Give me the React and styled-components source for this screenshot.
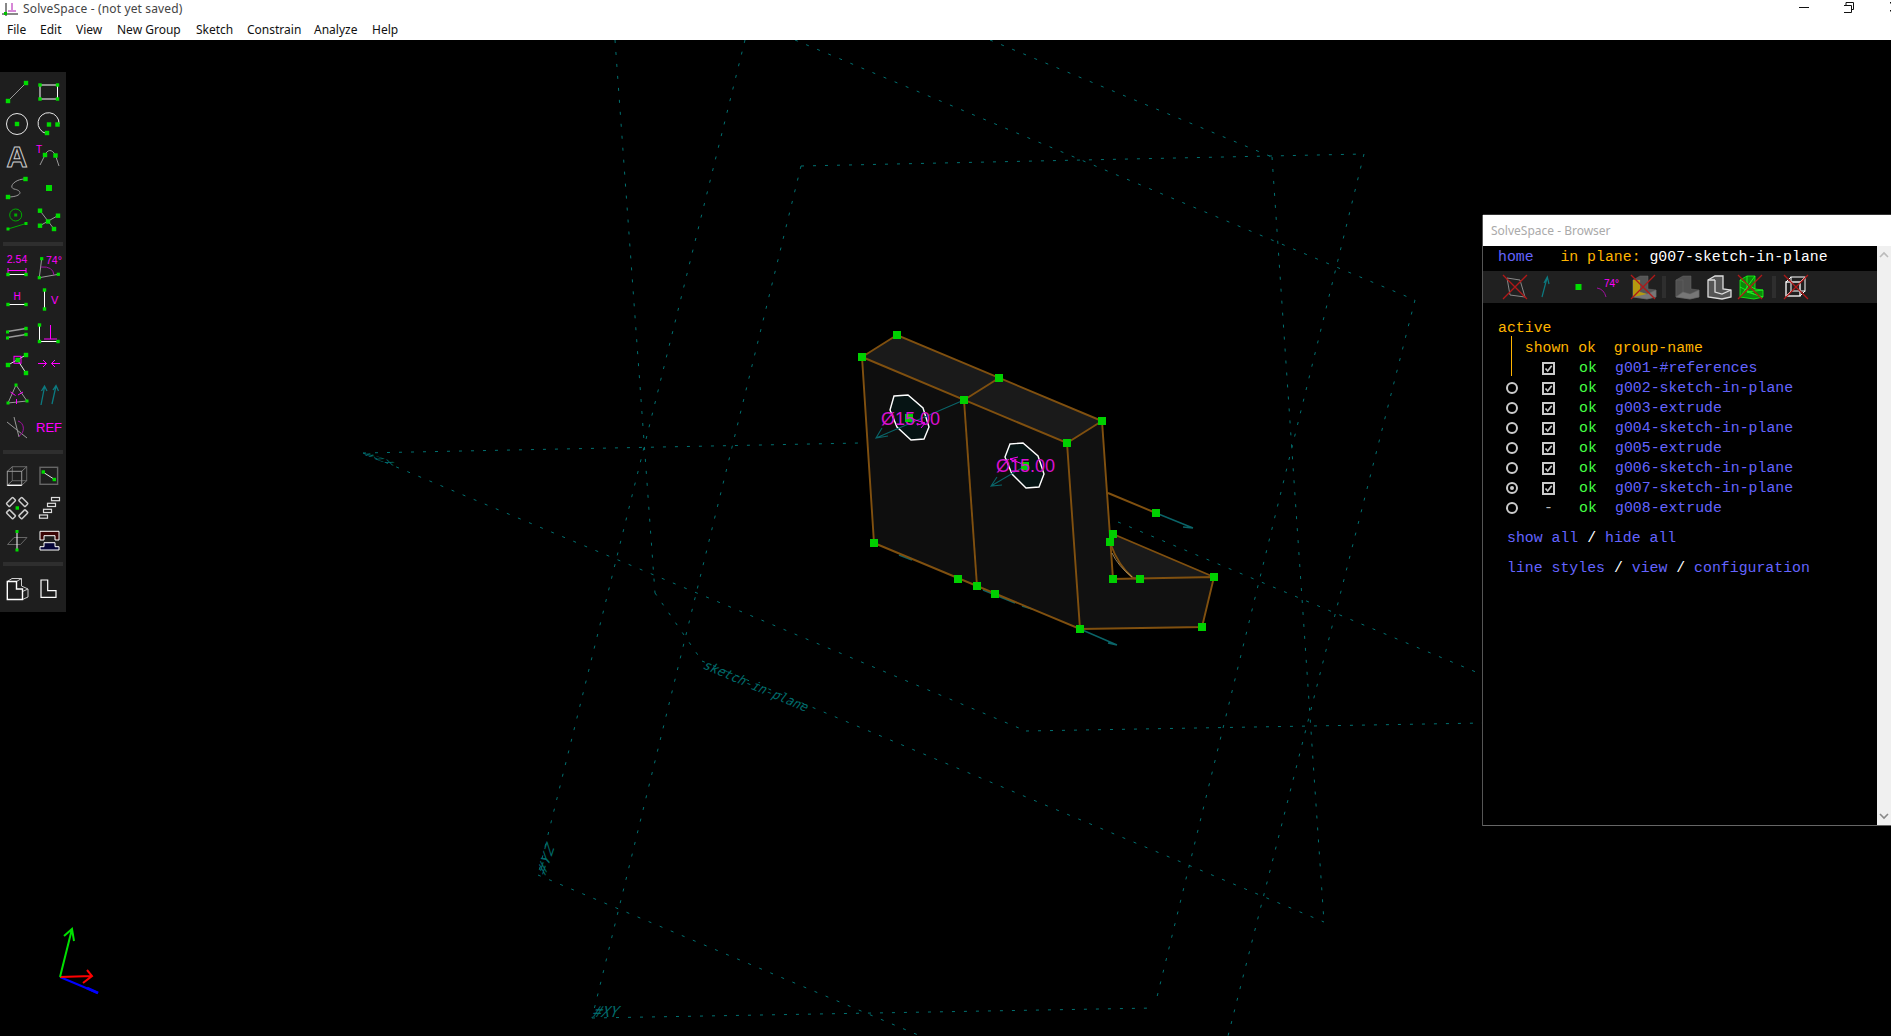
import React from "react";
import styled, { createGlobalStyle } from "styled-components";

const Global = createGlobalStyle`
  html, body { margin: 0; padding: 0; background: #000; overflow: hidden; }
  #root { width: 1891px; height: 1036px; }
`;

const Page = styled.div`
  width: 1891px; height: 1036px; display: flex; flex-direction: column;
  background: #000; font-family: "Noto Sans", "Liberation Sans", sans-serif;
`;
const TitleBar = styled.header`
  height: 20px; background: #fff; display: flex; align-items: center; color: #444; font-size: 12px;
`;
const AppIcon = styled.svg`width: 20px; height: 18px; margin: 0 3px 0 0; flex: none;`;
const TitleText = styled.span`flex: 1; white-space: nowrap; line-height: 16px; position: relative; top: -1px; letter-spacing: 0.14px;`;
const WinButtons = styled.div`display: flex; align-items: center; height: 20px;`;
const WinButton = styled.svg`width: ${p => p.$w}px; height: 20px; display: block;`;
const MenuBar = styled.nav`
  height: 20px; background: #fff; display: flex; align-items: center; font-size: 12px; color: #111; padding-left: 7px; gap: 15px;
`;
const MenuItem = styled.span`display: block; width: ${p => p.$w}px; white-space: nowrap; line-height: 20px;`;
const Canvas = styled.main`flex: 1; position: relative; overflow: hidden; background: #000;`;
const Scene = styled.svg`display: block; width: 1891px; height: 996px;`;

const Toolbar = styled.aside`
  position: absolute; left: 0; top: 32px; width: 66px; height: 540px; background: #1e1e1e;
  padding-top: 4px; box-sizing: border-box; display: flex; flex-direction: column; align-items: center;
`;
const ToolGroup = styled.div`display: grid; grid-template-columns: 32px 32px; grid-auto-rows: 32px; width: 64px;`;
const ToolSep = styled.div`width: 60px; height: 4px; background: #2e2e2e; margin: ${p => p.$m};`;
const Ico = styled.svg`width: 32px; height: 32px; display: block; overflow: visible;`;

const Browser = styled.section`
  position: absolute; left: 1483px; top: 175px; width: 408px; height: 611px; background: #000;
  display: flex; flex-direction: column; box-sizing: border-box; border-bottom: 1px solid #666; box-shadow: -1px 0 0 #555, 0 -1px 0 #333;
`;
const BrowserTitle = styled.div`
  height: 31px; flex: none; background: #fff; color: #aaa; font-size: 12px; padding-left: 8px; display: flex; align-items: center;
`;
const BrowserBody = styled.div`flex: 1; display: flex; min-height: 0;`;
const BrowserMain = styled.div`
  flex: 1; font-family: "Liberation Mono", "DejaVu Sans Mono", monospace; font-size: 14.85px; color: #fff; white-space: pre;
`;
const Line = styled.div`
  height: 20px; line-height: 20px; padding-left: ${p => p.$pad || 15}px; margin-top: ${p => p.$mt || 0}px; color: ${p => p.$c || "#fff"};
`;
const Link = styled.span`color: #6464ff;`;
const Amber = styled.span`color: #ffb400;`;
const IconBar = styled.div`
  height: 32px; margin-top: 4px; background: #202020; display: flex; align-items: center; padding-left: 16px;
`;
const BarSep = styled.div`width: 4px; height: 22px; background: #2e2e2e; margin: 0 4px 0 ${p => p.$l || 4}px;`;
const List = styled.div`position: relative; margin-top: 15px;`;
const ActiveLine = styled.div`
  position: absolute; left: 28px; top: 18px; width: 1px; height: 40px; background: #ffb400;
`;
const Row = styled.div`
  display: grid; grid-template-columns: 36px 13px 24px 36px 1fr; height: 20px; align-items: center; line-height: 20px;
  padding-left: 23px;
`;
const Radio = styled.span`
  width: 12px; height: 12px; box-sizing: border-box; border: 2px solid #ccc; border-radius: 50%; display: flex; align-items: center; justify-content: center;
  &::after { content: ""; display: ${p => p.$on ? "block" : "none"}; width: 4px; height: 4px; border-radius: 50%; background: #ccc; }
`;
const Check = styled.svg`width: 13px; height: 13px; display: block;`;
const Dash = styled.span`color: #bbb; text-align: center;`;
const Ok = styled.span`color: #44ff44;`;
const Name = styled.span`color: #6464ff;`;
const Scrollbar = styled.div`
  width: 14px; flex: none; background: #f0f0f0; display: flex; flex-direction: column; justify-content: space-between; align-items: center; padding: 5px 0; box-sizing: border-box;
`;
const Arrow = styled.svg`width: 10px; height: 7px; display: block;`;

const GREEN = "#00dc00";
const MAG = "#ff00ff";
const WH = "#e8e8e8";
const GR = "#999";
const S = ({ x, y, s = 4.4, c = GREEN }) => <rect x={x - s / 2} y={y - s / 2} width={s} height={s} fill={c} />;
const T = ({ x, y, size = 10, c = MAG, children, anchor = "start" }) => (
  <text x={x} y={y} fontSize={size} fill={c} textAnchor={anchor} fontFamily="'Liberation Sans', sans-serif">{children}</text>
);
const LN = ({ d, c = WH, w = 1 }) => <path d={d} fill="none" stroke={c} strokeWidth={w} />;

const Pill = ({ x, y, a }) => (
  <rect x="-4.5" y="-2.2" width="9" height="4.4" rx="0.8" fill="none" stroke="#ccc" strokeWidth="1.5" transform={`translate(${x},${y}) rotate(${a})`} />
);

const tools = [
  [
    <><LN d="M7 25L25 7" c={GR} /><S x={7} y={25} /><S x={25} y={7} /></>,
    <><rect x="7" y="9" width="17.5" height="14" fill="none" stroke="#fff" /><S x={7} y={9} s={3.4} /><S x={24.5} y={9} s={3.4} /><S x={7} y={23} s={3.4} /><S x={24.5} y={23} s={3.4} /></>,
    <><circle cx="16" cy="16" r="10.5" fill="none" stroke={WH} /><S x={16} y={16} /></>,
    <><LN d="M13.5 25.5A10.5 10.5 0 1 1 26 16" /><S x={16} y={16.5} /><S x={24.5} y={16.5} /><S x={14} y={25} /></>,
    <text x="16" y="27" fontSize="29" fontWeight="bold" fill="#1e1e1e" stroke="#ccc" strokeWidth="1" textAnchor="middle" fontFamily="'Liberation Sans', sans-serif">A</text>,
    <><T x={3} y={13} size={10}>T</T><LN d="M7 25L12 15C14 10 19 8 22.5 15.5L26 26" c={GR} /><S x={12} y={15} /><S x={22.5} y={15.5} /></>,
    <><LN d="M7 25C20 25 23 19 13 17C7 15 14 7 24 7" c={GR} /><S x={7} y={25} /><S x={24.5} y={7} /></>,
    <S x={16} y={16} s={6} />,
    <><circle cx="14.7" cy="11" r="6" fill="none" stroke="#0a0" /><S x={14.7} y={11} s={3} c="#0a0" /><LN d="M7 25L25 19.5" c="#0a0" /><S x={7} y={25} s={3} /><S x={25} y={19.5} s={3} /></>,
    <><LN d="M7 6.7L21 25M7 21.7L24.7 11.7" c={GR} /><S x={7} y={6.7} /><S x={21} y={25} /><S x={7} y={21.7} /><S x={25} y={11.7} /><S x={15} y={17.5} /></>,
  ],
  [
    <><T x={16} y={12} size={10.5} anchor="middle">2.54</T><LN d="M7 17v5M7 19.5H25M25 17v5" c={MAG} /><LN d="M7 23.5H25" c="#fff" /><S x={7} y={23.5} s={3.4} /><S x={25} y={23.5} s={3.4} /></>,
    <><T x={13} y={13} size={10.5}>74°</T><LN d="M8.7 7.7L6.3 26.7L25.3 23.3" c={GR} /><LN d="M8 16Q20 15 21 24" c="#a010a0" /><S x={8.7} y={7.7} s={3.2} /><S x={6.3} y={26.7} s={3.2} /><S x={25.3} y={23.3} s={3.2} /></>,
    <><T x={16} y={17} size={10} anchor="middle">H</T><LN d="M7 21.5H25" c="#fff" /><S x={7} y={21.5} s={3.4} /><S x={25} y={21.5} s={3.4} /></>,
    <><T x={18} y={21} size={11}>V</T><LN d="M11.5 7V26" c="#fff" /><S x={11.5} y={7} s={3.4} /><S x={11.5} y={26} s={3.4} /></>,
    <><LN d="M6.5 16.5L25 13.5M6.5 22.5L25 19.5" c={GR} w={1.3} /><S x={25} y={13.5} s={3.4} /><S x={25} y={19.5} s={3.4} /><S x={6.5} y={17} s={3} /><S x={6.5} y={23} s={3} /></>,
    <><LN d="M6.5 10V27M6.5 26.5H25" c="#fff" /><LN d="M17.5 10V24M11 24H24" c={MAG} /><S x={6.5} y={10} s={3.4} /><S x={6.5} y={26.5} s={3.4} /><S x={25} y={26.5} s={3.4} /></>,
    <><LN d="M7 18L25 8M16.5 13L25 26" c={WH} /><S x={7} y={18} /><S x={25} y={8} /><S x={25} y={26} /><S x={16.7} y={13} /><rect x="13" y="9.3" width="7" height="7" fill="none" stroke={MAG} /></>,
    <><LN d="M5 16.5H13.5M10 13l3.5 3.5L10 20M27 16.5H18.5M22 13l-3.5 3.5L22 20" c={MAG} /></>,
    <><LN d="M15 6L7 24L26 22Z" c={GR} /><LN d="M9.5 13l5 3.5M22 13l-5 3M15.5 20v5" c={MAG} /><S x={15} y={6} s={3} /><S x={7} y={24} s={3} /><S x={26} y={22} s={3} /></>,
    <><LN d="M8 26L11.5 8M8.5 12L11.5 7L14 12M19 25L23 7M20 11L23 6.5L25.5 12" c="#0c7a80" w={1.3} /></>,
    <><LN d="M6 11L26 27M13 6L18 26" c={GR} /><LN d="M17 10C24 12 24 22 18 25" c="#a010a0" /></>,
    <T x={16} y={21} size={13} anchor="middle">REF</T>,
  ],
  [
    <><rect x="11.3" y="6.7" width="14.4" height="14" fill="none" stroke="#666" /><LN d="M6.3 11.3L11.3 6.7M20.7 11.3L25.7 6.7M20.7 25.3L25.7 20.7M6.3 25.3L11.3 20.7" c="#777" /><rect x="6.3" y="11.3" width="14.4" height="14" fill="none" stroke="#999" /><LN d="M6.3 25.3H20.7" c="#fff" w={1.3} /></>,
    <><rect x="7" y="7.3" width="17.6" height="17" fill="none" stroke="#666" strokeWidth="1.4" /><LN d="M10.3 12.3L21.3 19.3" c={WH} /><S x={10.3} y={12} s={3.4} /><S x={21.3} y={19.5} s={3.4} /></>,
    <><Pill x={10} y={10} a={-45} /><Pill x={22.3} y={10} a={45} /><Pill x={10} y={22.3} a={45} /><Pill x={22.3} y={22.3} a={-45} /><S x={16.3} y={16} s={3.4} /></>,
    <g fill="none" stroke="#ddd" strokeWidth="1.2"><rect x="6.5" y="23" width="8" height="3.2" /><rect x="10.5" y="17.3" width="8" height="3.2" /><rect x="14.5" y="11.3" width="8" height="3.2" /><rect x="18.5" y="5.5" width="8" height="3.2" /></g>,
    <><path d="M6.5 20.5L13 13.5H26L19.5 20.5Z" fill="none" stroke="#666" /><LN d="M16 7V26" c="#fff" /><S x={16} y={7.5} s={3} /><S x={16} y={26} s={3} /></>,
    <><path d="M7 7.3H26V16H22V11.7H11V16H7Z" fill="#3a0505" stroke="#fff" strokeWidth="1" /><path d="M7 26V22.7H11V18.7H22V22.7H26V26Z" fill="#050538" stroke="#fff" strokeWidth="1" /></>,
  ],
  [
    <><LN d="M11 6.5H20.5V14M20.5 14L27 17V25L21.5 27.5M6.3 9.5L11 6.5M15.5 9.5L20.5 6.5M21.5 27.5V19.5L27 17" c="#ccc" /><path d="M6.3 9.5H15.5V17H21.5V27.5H6.3Z" fill="none" stroke="#fff" strokeWidth="1.4" /></>,
    <path d="M8 8H14.7V18.7H23V25.3H8Z" fill="none" stroke="#fff" strokeWidth="1.2" />,
  ],
];

const Xx = () => <LN d="M4 4L28 28M28 4L4 28" c="#b01818" w={1.3} />;
const LSolid = ({ f = "#555", s = "#666", sw = 0.5 }) => (
  <g stroke={s} strokeWidth={sw}>
    <path d="M6 9L13 5H21V18L29 19V26L20 28L6 26Z" fill={f} />
    <path d="M6 9H13V21L6 26Z" fill={f} />
    <path d="M13 21L20 23L29 19V26L20 28L6 26Z" fill="#777" />
  </g>
);
const barIcons = [
  { k: 1, el: <><path d="M8 7L21 9L26 26L11 24Z" fill="none" stroke="#888" strokeWidth="1" /><Xx /></> },
  { k: 2, el: <LN d="M11 26L16 7M13 12L16.3 6L18 13" c="#0c7a80" w={1.2} /> },
  { k: 3, el: <S x={15.5} y={16} s={6} /> },
  { k: 4, el: <><T x={9} y={16} size={10}>74°</T><LN d="M2 17Q9 18 11 26" c="#a010a0" /></> },
  { k: 5, el: <><LSolid f="#555" /><path d="M6 9H13V21L20 23L6 26Z" fill="#b59a10" /><Xx /></> },
  { sep: true, k: 6, l: 3 },
  { k: 7, el: <LSolid f="#505050" /> },
  { k: 8, el: <><path d="M6 9L13 5H21V18L29 19V26L20 28L6 26Z" fill="#555" stroke="#ddd" strokeWidth="1.3" /><path d="M13 9V21L20 23L29 19M6 9H13" fill="none" stroke="#ddd" strokeWidth="1.3" /></> },
  { k: 9, el: <><path d="M6 9L13 5H21V18L29 19V26L20 28L6 26Z" fill="#0a8a0a" stroke="#1f1" strokeWidth="0.8" /><path d="M6 9L21 18M13 5L13 21L29 26M6 26L21 5M13 21L29 19M20 23L6 16" fill="none" stroke="#2f2" strokeWidth="0.8" /><Xx /></> },
  { sep: true, k: 10, l: 6 },
  { k: 11, el: <><rect x="11" y="6" width="14" height="14" fill="none" stroke="#fff" strokeWidth="1" /><rect x="6" y="11" width="14" height="14" fill="none" stroke="#fff" strokeWidth="1.3" /><LN d="M6 11L11 6M20 11L25 6M20 25L25 20M6 25L11 20" c="#fff" /><Xx /></> },
];

const groups = [
  ["g001-#references", null, true],
  ["g002-sketch-in-plane", false, true],
  ["g003-extrude", false, true],
  ["g004-sketch-in-plane", false, true],
  ["g005-extrude", false, true],
  ["g006-sketch-in-plane", false, true],
  ["g007-sketch-in-plane", true, true],
  ["g008-extrude", false, false],
];

const dashed = [
  [363, 453, 1026, 731], [1026, 731, 1483, 723], [363, 453, 860, 443],
  [615, 40, 655, 593], [655, 593, 702, 661], [702, 661, 1324, 922],
  [745, 40, 538, 875], [801, 166, 592, 1018], [801, 166, 1364, 154],
  [990, 40, 1272, 157], [795, 40, 1415, 300], [1272, 157, 1324, 922],
  [1364, 154, 1157, 997], [1415, 300, 1228, 1036], [592, 1018, 1155, 1008],
  [538, 875, 930, 1040], [1118, 522, 1483, 675],
];

const pts = [[897,335],[862,357],[999,378],[964,400],[1102,421],[1067,443],[874,543],[958,579],[977,586],[995,594],[1080,629],[1202,627],[1214,577],[1140,579],[1113,579],[1110,542],[1113,534],[1156,513]];
const BR = "#80500f";

export default function App() {
  return (
    <Page>
      <Global />
      <TitleBar>
        <AppIcon viewBox="0 0 20 18">
          <path d="M6 2V15M2 13H18" stroke="#111" strokeWidth="1" fill="none" />
          <path d="M12 2V9M8 10H16" stroke="#b010b0" strokeWidth="1" fill="none" />
          <rect x="4" y="11" width="3" height="3" fill="#00c000" />
        </AppIcon>
        <TitleText>SolveSpace - (not yet saved)</TitleText>
        <WinButtons>
          <WinButton $w={45} viewBox="0 0 45 20"><path d="M0 7.5H10" stroke="#111" /></WinButton>
          <WinButton $w={46} viewBox="0 0 46 20"><path d="M-.5 5.5H7.5V12.5H-.5ZM2 5V2.5H9.5V9.5H8" fill="none" stroke="#111" /></WinButton>
          <WinButton $w={1} viewBox="0 0 1 20"><path d="M.5 2V3.5M.5 10V11.5" stroke="#111" /></WinButton>
        </WinButtons>
      </TitleBar>
      <MenuBar>
        {[["File",18],["Edit",21],["View",26],["New Group",64],["Sketch",36],["Constrain",52],["Analyze",43],["Help",26]].map(([m, w]) => (
          <MenuItem key={m} $w={w}>{m}</MenuItem>
        ))}
      </MenuBar>
      <Canvas>
        <Scene viewBox="0 40 1891 996">
          <g stroke="#007272" strokeWidth="1" strokeDasharray="3 9" fill="none">
            {dashed.map((l, i) => <line key={i} x1={l[0]} y1={l[1]} x2={l[2]} y2={l[3]} />)}
          </g>
          <g fill="#006a6a" fontFamily="'DejaVu Sans Mono', monospace">
            <text transform="translate(702,668) rotate(23) skewX(-15)" fontSize="13" textLength="112" lengthAdjust="spacingAndGlyphs">sketch-in-plane</text>
            <text transform="translate(592,1017) skewX(-22)" fontSize="15" textLength="25" lengthAdjust="spacingAndGlyphs">#XY</text>
            <text transform="translate(545,877) rotate(-72) skewX(-30)" fontSize="13" textLength="30" lengthAdjust="spacingAndGlyphs">#YZ</text>
            <text transform="translate(364,455) rotate(20) scale(1,.35)" fontSize="14" textLength="32" lengthAdjust="spacingAndGlyphs">#ZX</text>
          </g>

          <path d="M897 335L1102 421L1067 443L862 357Z" fill="#1a1a1a" />
          <path d="M862 357L1067 443L1080 629L874 543Z" fill="#0e0e0e" />
          <path d="M1067 443L1102 421L1113 579L1214 577L1202 627L1080 629Z" fill="#111" />
          <path d="M1113 534L1214 577L1140 579L1133 578Q1118 565 1111 545Z" fill="#191919" />

          <polygon points="894,396 908,395 923,408 929,427 924,439 911,440 897,427 890,410" fill="#061414" stroke="#fff" strokeWidth="1.4" />
          <polygon points="1010,444 1023,443 1038,456 1044,474 1039,487 1026,488 1012,474 1005,457" fill="#061414" stroke="#fff" strokeWidth="1.4" />

          <g stroke="#0a6468" strokeWidth="1.1" fill="none">
            <path d="M964 400L876 438M888 436L876 438L882 428" />
            <path d="M1025 466L991 486M1002 485L991 486L997 477" />
            <path d="M1156 513L1193 528M1183 527L1193 528" strokeWidth="1.4" />
            <path d="M1080 629L1117 645M1108 643L1117 645" strokeWidth="1.4" />
            <path d="M899 555L912 560M983 590L1015 603M1022 606L1032 609" strokeWidth="1.4" />
          </g>

          <g stroke={BR} strokeWidth="1.9" fill="none">
            <path d="M862 357L897 335L1102 421L1067 443L862 357Z" />
            <path d="M964 400L999 378" />
            <path d="M862 357L874 543L1080 629L1067 443M1102 421L1113 579L1214 577L1202 627L1080 629" />
            <path d="M964 400L977 586" />
            <path d="M1108 493L1156 513M1113 534L1214 577" />
            <path d="M1111 545Q1118 565 1133 578L1140 579" />
          </g>
          <path d="M1112 553Q1118 566 1132 577" stroke="#c9b48a" strokeWidth="0.7" fill="none" />

          <g stroke={MAG} strokeWidth="1" fill="none">
            <path d="M909 418L925 423M917 425L925 423L921 428" />
            <path d="M1025 465L1010 459M1018 457L1010 459L1016 463" />
          </g>
          <S x={909} y={418} s={8} c="#00d000" />
          <S x={1025} y={466} s={8} c="#00d000" />
          {pts.map((p, i) => <S key={i} x={p[0]} y={p[1]} s={8} c="#00d000" />)}
          <g fill="#d810d0" fontFamily="'Liberation Sans', sans-serif" fontSize="18">
            <text x="881" y="425">Ø15.00</text>
            <text x="996" y="472">Ø15.00</text>
          </g>

          <g fill="none" strokeWidth="2">
            <path d="M60 977L98 993" stroke="#0000ff" />
            <path d="M87 988L98 993" stroke="#0000ff" strokeWidth="3" />
            <path d="M60 977L92 976M87 970L92 976L83 983" stroke="#ff0000" />
            <path d="M60 977L72 929M64 936L72 929L74 941" stroke="#00e000" />
          </g>
        </Scene>

        <Toolbar>
          {tools.map((g, i) => (
            <React.Fragment key={i}>
              {i > 0 && <ToolSep $m={i === 1 ? "6px 0 5px" : i === 2 ? "7px 0 6px" : "6px 0 6px"} />}
              <ToolGroup>
                {g.map((el, j) => <Ico key={j} viewBox="0 0 32 32">{el}</Ico>)}
              </ToolGroup>
            </React.Fragment>
          ))}
        </Toolbar>

        <Browser>
          <BrowserTitle>SolveSpace - Browser</BrowserTitle>
          <BrowserBody>
            <BrowserMain>
              <Line $mt={1}><Link>home</Link>   <Amber>in plane:</Amber> g007-sketch-in-plane</Line>
              <IconBar>
                {barIcons.map(b => b.sep
                  ? <BarSep key={b.k} $l={b.l} />
                  : <Ico key={b.k} viewBox="0 0 32 32">{b.el}</Ico>)}
              </IconBar>
              <List>
                <ActiveLine />
                <Line $c="#ffb400">active</Line>
                <Line $c="#ffb400">   shown ok  group-name</Line>
                {groups.map(([name, radio, shown]) => (
                  <Row key={name}>
                    {radio === null ? <span /> : <Radio $on={radio} />}
                    {shown ? (
                      <Check viewBox="0 0 13 13">
                        <rect x="1" y="1" width="11" height="11" fill="#000" stroke="#ccc" strokeWidth="2" />
                        <path d="M3.5 6.5L5.7 9L9.7 3.8" fill="none" stroke="#ccc" strokeWidth="1.7" />
                      </Check>
                    ) : <Dash>-</Dash>}
                    <span />
                    <Ok>ok</Ok>
                    <Name>{name}</Name>
                  </Row>
                ))}
                <Line $pad={24} $mt={10}><Link>show all</Link> / <Link>hide all</Link></Line>
                <Line $pad={24} $mt={10}><Link>line styles</Link> / <Link>view</Link> / <Link>configuration</Link></Line>
              </List>
            </BrowserMain>
            <Scrollbar>
              <Arrow viewBox="0 0 10 7"><path d="M1 6L5 2L9 6" fill="none" stroke="#bbb" strokeWidth="1.6" /></Arrow>
              <Arrow viewBox="0 0 10 7"><path d="M1 1L5 5L9 1" fill="none" stroke="#888" strokeWidth="1.6" /></Arrow>
            </Scrollbar>
          </BrowserBody>
        </Browser>
      </Canvas>
    </Page>
  );
}
